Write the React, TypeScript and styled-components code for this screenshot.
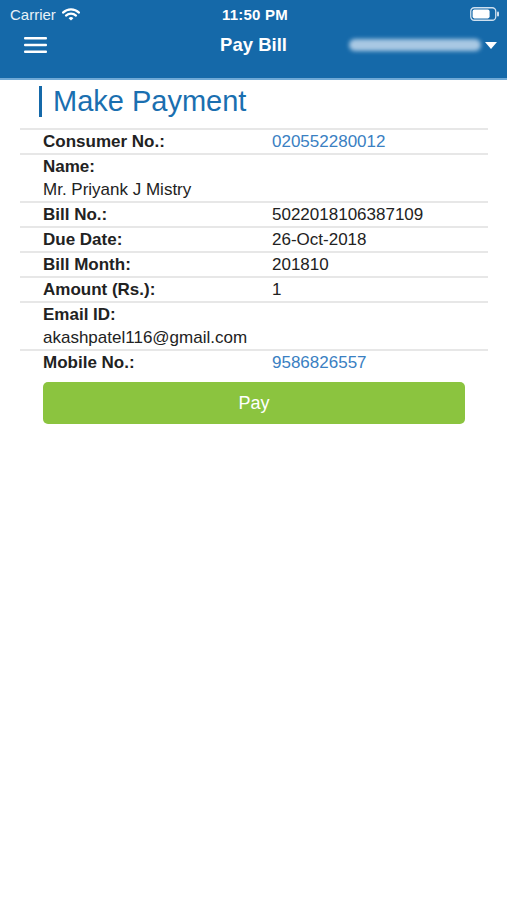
import React from "react";
import styled, { createGlobalStyle } from "styled-components";

const Global = createGlobalStyle`
  html, body { margin: 0; padding: 0; background: #ffffff; }
  body { font-family: "Liberation Sans", Arial, sans-serif; }
  * { box-sizing: border-box; }
`;

const Page = styled.div`
  width: 507px;
  min-height: 900px;
  background: #ffffff;
`;

const Header = styled.header`
  background: #1569a9;
  border-bottom: 2px solid #6fa9d6;
  height: 80px;
  display: flex;
  flex-direction: column;
`;

const StatusBar = styled.div`
  height: 28px;
  display: grid;
  grid-template-columns: 1fr auto 1fr;
  align-items: center;
  padding: 0 7px 0 10px;
  color: #ffffff;
  font-size: 15px;
`;

const Carrier = styled.div`
  display: flex;
  align-items: center;
  gap: 6px;
  color: #e8f1f8;
`;

const Time = styled.div`
  font-weight: 700;
  font-size: 15px;
  letter-spacing: 0.2px;
`;

const BatteryWrap = styled.div`
  justify-self: end;
  display: flex;
  align-items: center;
`;

const NavBar = styled.div`
  flex: 1;
  display: grid;
  grid-template-columns: 1fr auto 1fr;
  align-items: center;
  padding: 0 10px 16px 10px;
`;

const MenuButton = styled.div`
  display: flex;
  align-items: center;
  padding-left: 14px;
`;

const Title = styled.div`
  color: #ffffff;
  font-weight: 700;
  font-size: 18.5px;
`;

const Account = styled.div`
  justify-self: end;
  display: flex;
  align-items: center;
  gap: 4px;
`;

const Blurred = styled.div`
  width: 132px;
  height: 12px;
  border-radius: 6px;
  background: #b9d3ea;
  filter: blur(2px);
  opacity: 0.9;
`;

const Caret = styled.div`
  width: 0;
  height: 0;
  border-left: 6px solid transparent;
  border-right: 6px solid transparent;
  border-top: 7px solid #ffffff;
`;

const Content = styled.main`
  padding: 6px 19px 0 20px;
`;

const Heading = styled.h1`
  margin: 0 0 11px 19px;
  padding-left: 11px;
  border-left: 3px solid #1569a9;
  color: #1a6fb0;
  font-weight: 400;
  font-size: 29px;
  line-height: 30px;
  height: 31px;
`;

const Table = styled.div`
  display: flex;
  flex-direction: column;
`;

const Row = styled.div`
  border-top: 2px solid #e7e7e7;
  padding-left: 23px;
  display: grid;
  grid-template-columns: 229px 1fr;
  font-size: 17px;
  line-height: 23px;
  color: #222222;
`;

const StackRow = styled.div`
  border-top: 2px solid #e7e7e7;
  padding-left: 23px;
  display: flex;
  flex-direction: column;
  font-size: 17px;
  line-height: 23px;
  color: #222222;
`;

const Label = styled.div`
  font-weight: 700;
`;

const Value = styled.div<{ $link?: boolean }>`
  color: ${(p) => (p.$link ? "#3a80c2" : "#222222")};
`;

const PayButton = styled.button`
  margin: 8px 0 0 23px;
  width: 422px;
  height: 42px;
  border: none;
  border-radius: 5px;
  background: #8bc43f;
  color: #ffffff;
  font-family: "Liberation Sans", Arial, sans-serif;
  font-size: 18px;
`;

const Hamburger = () => (
  <svg width="23" height="18" viewBox="0 0 23 18">
    <rect x="0" y="1" width="23" height="2.6" rx="1" fill="#ffffff" />
    <rect x="0" y="7.7" width="23" height="2.6" rx="1" fill="#ffffff" />
    <rect x="0" y="14.4" width="23" height="2.6" rx="1" fill="#ffffff" />
  </svg>
);

const Wifi = () => (
  <svg width="18" height="13" viewBox="0 0 18 13">
    <path d="M1 4.6 A11.5 11.5 0 0 1 17 4.6" stroke="#ffffff" strokeWidth="2.2" fill="none" strokeLinecap="round" />
    <path d="M4 7.6 A7.2 7.2 0 0 1 14 7.6" stroke="#ffffff" strokeWidth="2.2" fill="none" strokeLinecap="round" />
    <path d="M6.6 10.3 L9 12.6 L11.4 10.3 A3.4 3.4 0 0 0 6.6 10.3 Z" fill="#ffffff" />
  </svg>
);

const Battery = () => (
  <svg width="30" height="14" viewBox="0 0 30 14">
    <rect x="0.75" y="0.75" width="25" height="12.5" rx="3.5" stroke="#cfe0ef" strokeWidth="1.3" fill="none" />
    <rect x="2.6" y="2.6" width="17" height="8.8" rx="1.8" fill="#ffffff" />
    <rect x="27" y="4.5" width="2" height="5" rx="1" fill="#cfe0ef" />
  </svg>
);

export default function App() {
  return (
    <Page>
      <Global />
      <Header>
        <StatusBar>
          <Carrier>
            <span>Carrier</span>
            <Wifi />
          </Carrier>
          <Time>11:50 PM</Time>
          <BatteryWrap>
            <Battery />
          </BatteryWrap>
        </StatusBar>
        <NavBar>
          <MenuButton>
            <Hamburger />
          </MenuButton>
          <Title>Pay Bill</Title>
          <Account>
            <Blurred />
            <Caret />
          </Account>
        </NavBar>
      </Header>
      <Content>
        <Heading>Make Payment</Heading>
        <Table>
          <Row>
            <Label>Consumer No.:</Label>
            <Value $link>020552280012</Value>
          </Row>
          <StackRow>
            <Label>Name:</Label>
            <Value>Mr. Priyank J Mistry</Value>
          </StackRow>
          <Row>
            <Label>Bill No.:</Label>
            <Value>5022018106387109</Value>
          </Row>
          <Row>
            <Label>Due Date:</Label>
            <Value>26-Oct-2018</Value>
          </Row>
          <Row>
            <Label>Bill Month:</Label>
            <Value>201810</Value>
          </Row>
          <Row>
            <Label>Amount (Rs.):</Label>
            <Value>1</Value>
          </Row>
          <StackRow>
            <Label>Email ID:</Label>
            <Value>akashpatel116@gmail.com</Value>
          </StackRow>
          <Row>
            <Label>Mobile No.:</Label>
            <Value $link>9586826557</Value>
          </Row>
        </Table>
        <PayButton>Pay</PayButton>
      </Content>
    </Page>
  );
}
